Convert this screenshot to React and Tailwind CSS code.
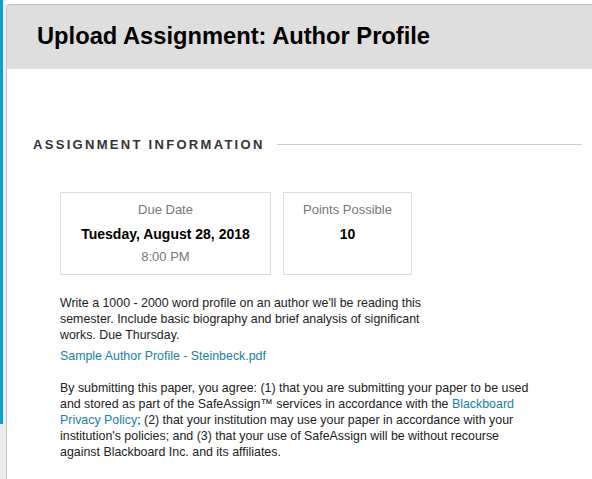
import React from 'react';

function InfoCard({ label, value, sub, width }) {
    return (
        <div className={`border border-[#dcdcdc] flex flex-col items-center pt-[9px] ${width}`}>
            <span className="text-[13px] leading-[16px] text-[#777]">{label}</span>
            <span className="text-[14px] leading-[18px] font-bold text-black mt-[7px]">{value}</span>
            {sub && <span className="text-[13px] leading-[16px] text-[#777] mt-[6px]">{sub}</span>}
        </div>
    );
}

function App() {
    return (
        <div className="flex w-[592px] h-[479px] overflow-hidden bg-white font-['Liberation_Sans',Arial,sans-serif]">
            <div className="w-[6px] shrink-0 bg-[#ececec] flex">
                <div className="w-[3px] h-[424px] bg-[#1b9bc4]" />
            </div>
            <div className="flex-1 flex flex-col mt-[4px] border-t border-l border-[#c4c4c4] rounded-tl-[3px] bg-white">
                <div className="h-[64px] bg-[#dedede] flex items-center pl-[30px]">
                    <h1 className="text-[23.7px] font-bold text-black">Upload Assignment: Author Profile</h1>
                </div>
                <div className="pt-[66px]">
                    <div className="flex items-center pl-[26px]">
                        <h2 className="text-[13px] font-bold tracking-[2.3px] text-[#333]">ASSIGNMENT INFORMATION</h2>
                        <div className="flex-1 h-px bg-[#cccccc] ml-[12px] mr-[10px]" />
                    </div>
                    <div className="pl-[53px] pt-[37px]">
                        <div className="flex gap-[12px] h-[83px]">
                            <InfoCard label="Due Date" value="Tuesday, August 28, 2018" sub="8:00 PM" width="w-[211px]" />
                            <InfoCard label="Points Possible" value="10" width="w-[129px]" />
                        </div>
                        <div className="text-[12.4px] leading-[16px] text-[#222] mt-[20px]">
                            <p className="w-[385px]">
                                Write a 1000 - 2000 word profile on an author we'll be reading this semester. Include basic biography and brief analysis of significant works. Due Thursday.
                            </p>
                            <a href="#" className="block mt-[5px] text-[#1c7f9e]">Sample Author Profile - Steinbeck.pdf</a>
                            <p className="w-[480px] mt-[16px]">
                                By submitting this paper, you agree: (1) that you are submitting your paper to be used and stored as part of the SafeAssign™ services in accordance with the{' '}
                                <a href="#" className="text-[#1c7f9e]">Blackboard Privacy Policy</a>; (2) that your institution may use your paper in accordance with your institution's policies; and (3) that your use of SafeAssign will be without recourse against Blackboard Inc. and its affiliates.
                            </p>
                        </div>
                    </div>
                </div>
            </div>
        </div>
    );
}

export default App;
